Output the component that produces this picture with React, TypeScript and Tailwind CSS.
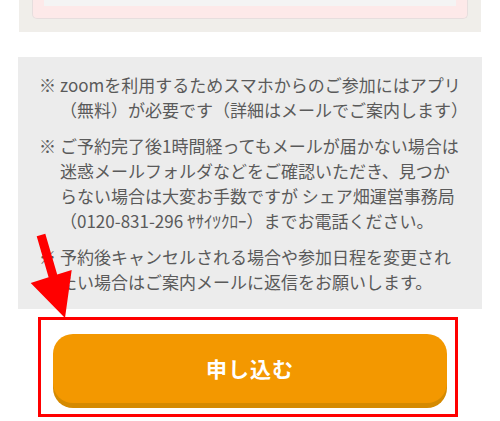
const notes = [
  ['zoomを利用するためスマホからのご参加にはアプリ', '（無料）が必要です（詳細はメールでご案内します）'],
  [
    'ご予約完了後1時間経ってもメールが届かない場合は',
    '迷惑メールフォルダなどをご確認いただき、見つか',
    'らない場合は大変お手数ですが シェア畑運営事務局',
    '（0120-831-296 ﾔｻｲﾂｸﾛｰ）までお電話ください。',
  ],
  ['予約後キャンセルされる場合や参加日程を変更され', 'たい場合はご案内メールに返信をお願いします。'],
];

function Note({ lines }: { lines: string[] }) {
  return (
    <div className="flex">
      <span className="w-[21px] shrink-0">※</span>
      <div className="flex flex-col">
        {lines.map((line) => (
          <span key={line} className="whitespace-nowrap">
            {line}
          </span>
        ))}
      </div>
    </div>
  );
}

export default function App() {
  return (
    <div
      className="relative w-[500px] h-[421px] overflow-hidden bg-white"
      style={{ fontFamily: '"Noto Sans CJK JP", "Noto Sans", sans-serif' }}
    >
      {/* form card, only its bottom edge is in view */}
      <div className="mx-[19px] h-[32px] bg-[#f0eeea] flex flex-col justify-end overflow-hidden px-[13px] pb-[13px]">
        <div className="shrink-0 rounded-b-[5px] border border-t-0 border-[#e6dede] bg-[#fde9e9] px-[11px] pb-[12px]">
          <div className="h-[40px] bg-[#f4f4f4]" />
        </div>
      </div>

      <div className="mx-[18px] mt-[25px] bg-[#ececec] pl-[21px] pr-[14px] pt-[15px] pb-[15px] text-[17px] leading-[25px] text-[#5a5a5a] flex flex-col gap-[11px]">
        {notes.map((lines, i) => (
          <Note key={i} lines={lines} />
        ))}
      </div>

      <button className="mx-[53px] mt-[25px] h-[69px] w-[394px] rounded-[20px] bg-[#f39800] shadow-[0_5px_0_#d58a00] text-white text-[21px] font-bold tracking-[1px]">
        申し込む
      </button>

      {/* annotation: red frame and arrow */}
      <div className="absolute left-[38px] top-[317px] w-[420px] h-[100px] border-[3px] border-[#ff0000]" />
      <svg className="absolute left-0 top-0 pointer-events-none" width="500" height="421" viewBox="0 0 500 421">
        <polygon
          fill="#ff0000"
          points="36.7,236.3 45.3,233.7 57.2,274.6 71.7,270 65,318 30.7,283 48.6,277.3"
        />
      </svg>
    </div>
  );
}
